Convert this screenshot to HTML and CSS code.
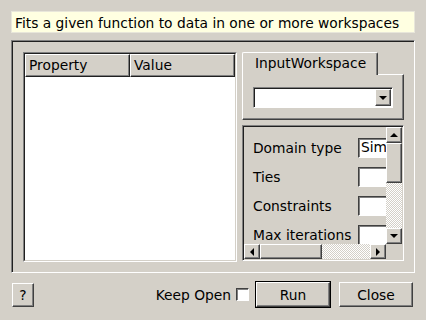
FILE: index.html
```html
<!DOCTYPE html>
<html lang="en">

<head>
    <meta charset="UTF-8">
    <meta name="viewport" content="width=device-width, initial-scale=1.0">
    <title>Fit</title>
    <link rel="stylesheet" href="styles.css">
</head>

<body>
    <div class="dialog">
        <div class="description">Fits a given function to data in one or more workspaces</div>

        <div class="frame">
            <div class="table">
                <div class="table-inner">
                    <div class="table-header">
                        <div class="header-cell col-property">Property</div>
                        <div class="header-cell col-value">Value</div>
                    </div>
                    <div class="table-body"></div>
                </div>
            </div>

            <div class="side">
                <div class="tabs">
                    <div class="tab-bar">
                        <div class="tab">InputWorkspace</div>
                    </div>
                    <div class="tab-pane">
                        <div class="combo">
                            <div class="combo-field"></div>
                            <div class="combo-button raised"><span class="arrow-down"></span></div>
                        </div>
                    </div>
                </div>

                <div class="scroll-area">
                    <div class="viewport">
                        <div class="form">
                            <div class="form-label">Domain type</div>
                            <div class="form-field">Simple</div>
                            <div class="form-label">Ties</div>
                            <div class="form-field"></div>
                            <div class="form-label">Constraints</div>
                            <div class="form-field"></div>
                            <div class="form-label">Max iterations</div>
                            <div class="form-field"></div>
                        </div>
                    </div>
                    <div class="vscroll">
                        <div class="sb-button raised"><span class="arrow-up"></span></div>
                        <div class="vthumb raised"></div>
                        <div class="trough"></div>
                        <div class="sb-button raised"><span class="arrow-down"></span></div>
                    </div>
                    <div class="hscroll">
                        <div class="sb-button raised"><span class="arrow-left"></span></div>
                        <div class="hthumb raised"></div>
                        <div class="trough"></div>
                        <div class="sb-button raised"><span class="arrow-right"></span></div>
                    </div>
                    <div class="corner"></div>
                </div>
            </div>
        </div>

        <div class="buttons">
            <button class="btn btn-help">?</button>
            <div class="spacer"></div>
            <label class="keep-open">Keep Open <span class="checkbox"></span></label>
            <button class="btn btn-run">Run</button>
            <button class="btn btn-close">Close</button>
        </div>
    </div>
</body>

</html>
```

FILE: styles.css
```css
* {
    box-sizing: border-box;
}

body {
    margin: 0;
    padding: 0;
    background-color: #d4d0c8;
    font-family: "DejaVu Sans", Verdana, sans-serif;
    font-size: 13.8px;
    color: #000;
}

.dialog {
    width: 426px;
    height: 320px;
    padding: 11px 11px 0 11px;
}

.description {
    height: 22px;
    line-height: 22px;
    padding: 0 3px;
    background-color: #ffffe1;
    border: 1px solid #e8e6da;
    white-space: nowrap;
}

/* classic bevels */
.raised {
    border: 1px solid;
    border-color: #fff #404040 #404040 #fff;
    box-shadow: inset -1px -1px #808080;
    background-color: #d4d0c8;
}

.frame {
    margin-top: 7px;
    height: 233px;
    display: flex;
    gap: 5px;
    padding: 11px 10px 10px 11px;
    border: 1px solid;
    border-color: #808080 #fff #fff #808080;
    box-shadow: inset 1px 1px #202020;
}

.table {
    width: 214px;
    height: 210px;
    border: 1px solid;
    border-color: #808080 #fff #fff #808080;
}

.table-inner {
    height: 100%;
    display: flex;
    flex-direction: column;
    border: 1px solid;
    border-color: #202020 #d4d0c8 #d4d0c8 #202020;
    background: #fff;
}

.table-header {
    display: flex;
    height: 23px;
}

.header-cell {
    height: 23px;
    line-height: 21px;
    padding-left: 3px;
    border: 1px solid;
    border-color: #fff #202020 #202020 #fff;
    box-shadow: inset -1px -1px #808080;
    background: #d4d0c8;
}

.col-property {
    width: 105px;
}

.col-value {
    flex: 1;
}

.table-body {
    flex: 1;
    background: #fff;
}

.side {
    width: 162px;
    display: flex;
    flex-direction: column;
}

.tab-bar {
    height: 22px;
    display: flex;
}

.tab {
    position: relative;
    z-index: 1;
    width: 136px;
    height: 23px;
    padding-left: 12px;
    line-height: 21px;
    background: #d4d0c8;
    border: 1px solid;
    border-bottom: none;
    border-color: #fff #404040 #404040 #fff;
    border-radius: 2px 2px 0 0;
    box-shadow: inset -1px 0 #808080;
}

.tab-pane {
    height: 46px;
    padding: 12px 0 0 10px;
    border: 1px solid;
    border-color: #fff #404040 #404040 #fff;
    box-shadow: inset -1px -1px #808080;
}

.combo {
    width: 140px;
    height: 21px;
    display: flex;
    border: 1px solid;
    border-color: #808080 #fff #fff #808080;
    box-shadow: inset 1px 1px #202020;
    background: #fff;
    padding: 1px 1px 1px 1px;
}

.combo-field {
    flex: 1;
}

.combo-button {
    width: 16px;
    display: flex;
    align-items: center;
    justify-content: center;
}

.scroll-area {
    margin-top: 5px;
    height: 136px;
    display: grid;
    grid-template-columns: 142px 16px;
    grid-template-rows: 117px 15px;
    border: 1px solid;
    border-color: #808080 #fff #fff #808080;
    box-shadow: inset 1px 1px #202020;
    padding: 1px 0 0 1px;
}

.viewport {
    overflow: hidden;
    background: #d4d0c8;
}

.form {
    display: grid;
    grid-template-columns: 100px 60px;
    column-gap: 5px;
    row-gap: 9px;
    padding: 11px 0 0 9px;
}

.form-label {
    height: 20px;
    line-height: 20px;
    white-space: nowrap;
}

.form-field {
    height: 20px;
    line-height: 17px;
    padding-left: 2px;
    background: #fff;
    border: 1px solid;
    border-color: #404040 #fff #fff #404040;
    box-shadow: inset 1px 1px #808080;
    overflow: hidden;
    white-space: nowrap;
}

.vscroll {
    display: flex;
    flex-direction: column;
}

.hscroll {
    display: flex;
}

.sb-button {
    flex: none;
    width: 16px;
    height: 15px;
    display: flex;
    align-items: center;
    justify-content: center;
}

.vscroll .sb-button {
    height: 16px;
}

.vthumb {
    height: 40px;
}

.hthumb {
    width: 62px;
}

.trough {
    flex: 1;
    background: repeating-conic-gradient(#fff 0 25%, #d4d0c8 0 50%) 0 0 / 2px 2px;
}

.corner {
    background: #d4d0c8;
}

.arrow-up,
.arrow-down {
    width: 0;
    height: 0;
    border-left: 4px solid transparent;
    border-right: 4px solid transparent;
}

.arrow-up {
    border-bottom: 4px solid #000;
}

.arrow-down {
    border-top: 4px solid #000;
}

.arrow-left,
.arrow-right {
    width: 0;
    height: 0;
    border-top: 4px solid transparent;
    border-bottom: 4px solid transparent;
}

.arrow-left {
    border-right: 4px solid #000;
}

.arrow-right {
    border-left: 4px solid #000;
}

.buttons {
    margin-top: 8px;
    height: 27px;
    display: flex;
    align-items: center;
    padding-right: 2px;
}

.spacer {
    flex: 1;
}

.btn {
    font-family: inherit;
    font-size: 13.8px;
    color: #000;
    padding: 0;
    background: #d4d0c8;
    border: 1px solid;
    border-color: #fff #404040 #404040 #fff;
    box-shadow: inset -1px -1px #808080;
    cursor: pointer;
}

.btn-help {
    width: 22px;
    height: 24px;
    margin-left: 1px;
}

.keep-open {
    display: flex;
    align-items: center;
    gap: 5px;
    margin-right: 7px;
}

.checkbox {
    width: 13px;
    height: 13px;
    background: #fff;
    border: 1px solid;
    border-color: #404040 #fff #fff #404040;
    box-shadow: inset 1px 1px #808080;
}

.btn-run {
    width: 74px;
    height: 25px;
    margin-right: 9px;
    outline: 1px solid #000;
}

.btn-close {
    width: 74px;
    height: 25px;
}
```
